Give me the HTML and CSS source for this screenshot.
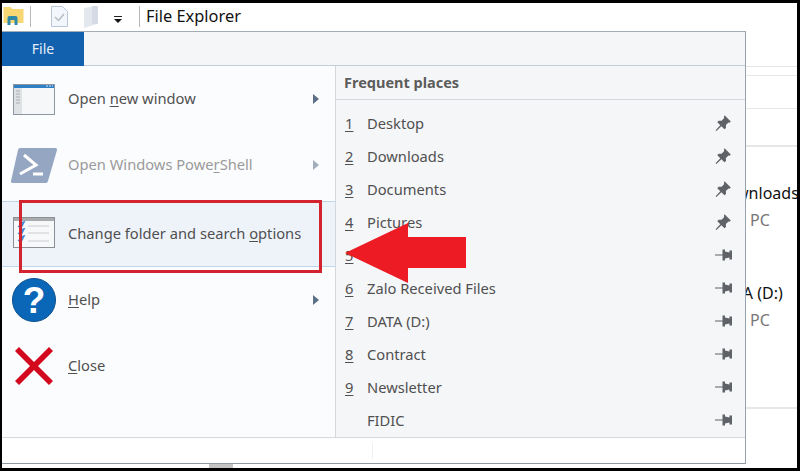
FILE: index.html
```html
<!DOCTYPE html>
<html lang="en">
<head>
<meta charset="utf-8">
<title>File Explorer</title>
<link rel="stylesheet" href="styles.css">
</head>
<body>
<svg class="defs" width="0" height="0" aria-hidden="true">
  <symbol id="pinned" viewBox="0 0 18 18"><path d="M10.500 1.200l6.300 6.300-1.300 1.200-1-.3-2.600 2.600.1 3-1.600 1.300-3-3-5 4.600-.8-.6 4.700-5.100-3-3 1.300-1.500 3 .1 2.600-2.700-.3-1z" fill="#5f6266"/></symbol>
  <symbol id="unpinned" viewBox="0 0 18 14"><path d="M0 6.500h7.500V1.500h2.500v2l4.500 1V2.500h2.500v9h-2.500v-2l-4.500 1v2H7.500v-5H0z" fill="#5f6266"/></symbol>
  <symbol id="chev" viewBox="0 0 6 10"><path d="M0 0l6 5-6 5z" fill="#5b6f86"/></symbol>
</svg>
<div class="frame">
  <header class="titlebar">
    <svg class="qa-folder" viewBox="0 0 20 20"><path d="M0 2h7l2 2h11v14H0z" fill="#f7d774"/><path d="M4 20v-7a2 2 0 012-2h6a2 2 0 012 2v7h-3v-5H7v5z" fill="#2e88a8"/></svg>
    <i class="qa-sep"></i>
    <svg class="qa-doc" viewBox="0 0 17 21"><path d="M.5.5h11l5 5v15H.5z" fill="#f3f6fb" stroke="#b9c6d8"/><path d="M4 11l3.500 3.500L13 8" fill="none" stroke="#b6bcc4" stroke-width="1.500"/></svg>
    <svg class="qa-fold" viewBox="0 0 14 22"><path d="M0 2l13-2v18L0 22z" fill="#e3e8ef"/><path d="M8 0h6v18H8z" fill="#d4dbe4"/></svg>
    <svg class="qa-drop" viewBox="0 0 8 7"><path d="M0 0h8v1H0z" fill="#222"/><path d="M0 3h8L4 7z" fill="#111"/></svg>
    <i class="qa-sep qa-sep-2"></i>
    <span class="title">File Explorer</span>
  </header>
  <div class="body">
    <section class="menu">
      <div class="tabrow"><div class="tab">File</div></div>
      <div class="panels">
        <nav class="commands">
          <div class="cmd">
            <svg class="cmd-icon" viewBox="0 0 42 31"><rect x=".5" y=".5" width="41" height="30" fill="#f6f7f8" stroke="#8c97a3"/><rect x="1" y="1" width="40" height="3" fill="#2f7fc4"/><rect x="1" y="4" width="8" height="26" fill="#dfe2e5"/><path d="M3 7h4M3 10h4M3 13h4M3 16h4M3 19h4" stroke="#a8adb3"/><path d="M33 2h2M36 2h2M39 2h1" stroke="#d7e6f4"/></svg>
            <span class="cmd-label">Open <u>n</u>ew window</span>
            <svg class="chev"><use href="#chev"/></svg>
          </div>
          <div class="cmd cmd-off">
            <svg class="cmd-icon cmd-ps" viewBox="0 0 46 35"><path d="M9 0h35q2.500 0 2 2l-9 31q-.500 2-2 2H2q-2.500 0-2-2L7 2q.500-2 2-2z" fill="#94a6c2"/><path d="M13 7l12 10-16 9" fill="none" stroke="#fff" stroke-width="3"/><path d="M22 26h10" stroke="#fff" stroke-width="3"/></svg>
            <span class="cmd-label">Open Windows Powe<u>r</u>Shell</span>
            <svg class="chev chev-off"><use href="#chev"/></svg>
          </div>
          <div class="cmd cmd-hover">
            <svg class="cmd-icon" viewBox="0 0 42 31"><rect x=".5" y=".5" width="41" height="30" fill="#f7f8fa" stroke="#8c8f94"/><rect x="1" y="1" width="40" height="3" fill="#a9abae"/><path d="M15 9h21M15 16h21M15 24h21" stroke="#c9ccd0"/><path d="M8 6l3-1-3 6-3-2M8 13l3-1-3 6-3-2M8 20l3-1-3 6-3-2" fill="none" stroke="#3b87d6" stroke-width="1.500"/></svg>
            <span class="cmd-label">Change folder and search <u>o</u>ptions</span>
          </div>
          <div class="cmd cmd-help">
            <svg class="cmd-icon cmd-q" viewBox="0 0 44 44"><circle cx="22" cy="22" r="21.500" fill="#0a67b8" stroke="#0b4f8c"/><text class="q-mark" x="22" y="35" text-anchor="middle">?</text></svg>
            <span class="cmd-label"><u>H</u>elp</span>
            <svg class="chev"><use href="#chev"/></svg>
          </div>
          <div class="cmd cmd-close">
            <svg class="cmd-icon cmd-x" viewBox="0 0 38 38"><path d="M4 0l15 15L34 0l4 4-15 15 15 15-4 4-15-15L4 38l-4-4 15-15L0 4z" fill="#d30a1e"/></svg>
            <span class="cmd-label"><u>C</u>lose</span>
          </div>
        </nav>
        <aside class="places">
          <h2 class="places-head">Frequent places</h2>
          <ul class="place-list">
            <li class="place"><u class="num">1</u><span class="name">Desktop</span><svg class="pin"><use href="#pinned"/></svg></li>
            <li class="place"><u class="num">2</u><span class="name">Downloads</span><svg class="pin"><use href="#pinned"/></svg></li>
            <li class="place"><u class="num">3</u><span class="name">Documents</span><svg class="pin"><use href="#pinned"/></svg></li>
            <li class="place"><u class="num">4</u><span class="name">Pictures</span><svg class="pin"><use href="#pinned"/></svg></li>
            <li class="place"><u class="num">5</u><span class="name"></span><svg class="unpin"><use href="#unpinned"/></svg></li>
            <li class="place"><u class="num">6</u><span class="name">Zalo Received Files</span><svg class="unpin"><use href="#unpinned"/></svg></li>
            <li class="place"><u class="num">7</u><span class="name">DATA (D:)</span><svg class="unpin"><use href="#unpinned"/></svg></li>
            <li class="place"><u class="num">8</u><span class="name">Contract</span><svg class="unpin"><use href="#unpinned"/></svg></li>
            <li class="place"><u class="num">9</u><span class="name">Newsletter</span><svg class="unpin"><use href="#unpinned"/></svg></li>
            <li class="place"><span class="num"></span><span class="name">FIDIC</span><svg class="unpin"><use href="#unpinned"/></svg></li>
          </ul>
        </aside>
      </div>
      <footer class="menu-foot"><i class="foot-tick"></i></footer>
    </section>
    <section class="behind">
      <div class="rule rule-a"></div>
      <div class="rule rule-b"></div>
      <div class="rule rule-c"></div>
      <div class="rule rule-e"></div>
      <div class="peek peek-a"><span class="peek-name">Downloads:</span><span class="peek-sub">PC</span></div>
      <div class="peek peek-b"><span class="peek-name peek-name-b">TA (D:)</span><span class="peek-sub">PC</span></div>
      <div class="rule rule-d"></div>
    </section>
  </div>
  <div class="bottom-strip"><i class="thumb"></i></div>
  <div class="callout-box"></div>
  <svg class="callout-arrow" viewBox="0 0 122 60"><path d="M0 30L63 0v14h58v31H63v15z" fill="#ed1c24"/></svg>
</div>
</body>
</html>
```
FILE: styles.css
```css
* { box-sizing: border-box; }
html, body { margin: 0; padding: 0; background: #000; }
.defs { position: absolute; }
.frame {
  position: relative;
  width: 795px;
  height: 465px;
  margin-top: 3px;
  margin-left: 2px;
  background: #fff;
  overflow: hidden;
  display: flex;
  flex-direction: column;
  font-family: "Noto Sans", "Open Sans", sans-serif;
}
.titlebar { height: 28px; display: flex; align-items: flex-start; flex: none; }
.qa-folder { width: 21px; height: 20px; margin: 2px 0 0 1px; }
.qa-sep { width: 1px; height: 21px; background: #b9b9b9; margin: 3px 0 0 6px; }
.qa-doc { width: 17px; height: 21px; margin: 3px 0 0 20px; }
.qa-fold { width: 14px; height: 22px; margin: 3px 0 0 16px; }
.qa-drop { width: 8px; height: 7px; margin: 13px 0 0 16px; }
.qa-sep-2 { margin-left: 17px; }
.title { margin-left: 6px; font-size: 16.400px; line-height: 26px; color: #111; }
.body { flex: 1; display: flex; min-height: 0; }
.menu {
  width: 744px;
  flex: none;
  display: flex;
  flex-direction: column;
  border-top: 1px solid #a4adb6;
  border-right: 1px solid #98a2ae;
  border-bottom: 1px solid #8f9aa3;
  background: #fff;
  height: 433px;
}
.tabrow { height: 34px; background: #f5f6f7; border-bottom: 1px solid #c4ccd6; flex: none; }
.tab { width: 82px; height: 34px; background: #1261ae; color: #e4eefa; font-size: 14px; line-height: 34px; text-align: center; }
.panels { flex: 1; display: flex; min-height: 0; border-bottom: 1px solid #d5d8dc; }
.commands { width: 334px; background: #fbfcfe; border-right: 1px solid #d4d7db; flex: none; display: flex; flex-direction: column; }
.cmd { height: 66px; display: flex; align-items: center; position: relative; padding-left: 11px; color: #505050; font-size: 14.700px; }
.cmd-icon { width: 42px; height: 31px; flex: none; }
.cmd-ps { width: 46px; height: 35px; margin-left: -2px; margin-right: -2px; }
.cmd-q { width: 44px; height: 44px; margin-left: -1px; margin-right: -1px; }
.cmd-x { width: 38px; height: 38px; margin-left: 2px; margin-right: 2px; }
.q-mark { font: bold 37px "Liberation Sans", sans-serif; fill: #fff; }
.cmd-label { margin-left: 13px; margin-top: -2px; flex: 1; white-space: nowrap; }
.cmd-hover .cmd-label { margin-top: 0; }
.cmd u, .place u { text-underline-offset: 2px; text-decoration-thickness: 1px; }
.chev { width: 6px; height: 10px; margin-right: 16px; flex: none; }
.chev-off { opacity: .55; }
.cmd-off { color: #9a9a9a; }
.cmd-hover { margin-top: 3px; height: 66px; background: #eef3fa; border-top: 1px solid #bfd6ea; border-bottom: 1px solid #bfd6ea; padding-bottom: 3px; }
.places { flex: 1; background: #f5f6f8; display: flex; flex-direction: column; min-width: 0; }
.places-head { height: 34px; margin: 0; padding: 6px 0 0 8px; font-size: 14.500px; line-height: 20px; font-weight: 700; color: #5c5c5c; border-bottom: 1px solid #d5d9df; }
.place-list { list-style: none; margin: 6px 0 0; padding: 0; }
.place { height: 33px; display: flex; align-items: center; padding-left: 9px; font-size: 14.700px; color: #505050; position: relative; }
.num { width: 22px; flex: none; text-align: left; }
.name { flex: 1; white-space: nowrap; }
.pin { width: 18px; height: 18px; margin-right: 13px; flex: none; }
.unpin { width: 18px; height: 14px; margin-right: 12px; flex: none; }
.menu-foot { height: 25px; flex: none; display: flex; align-items: center; padding-left: 370px; }
.foot-tick { width: 1px; height: 16px; background: #f0f0f0; }
.behind { flex: 1; position: relative; overflow: hidden; min-width: 0; font-size: 16px; color: #111; }
.rule { height: 1px; background: #e6e6e6; }
.rule-a { margin-top: 35px; }
.rule-b { margin-top: 8px; }
.rule-c { margin-top: 32px; }
.rule-e { margin-top: 36px; height: 2px; }
.rule-d { margin-top: 72px; height: 2px; }
.peek { display: flex; flex-direction: column; white-space: nowrap; }
.peek-a { margin-top: 34px; }
.peek-b { margin-top: 46px; }
.peek-name { margin-left: -31px; line-height: 24px; }
.peek-name-b { margin-left: -11px; }
.peek-sub { margin-left: 4px; color: #777; line-height: 30px; font-size: 16px; }
.bottom-strip { height: 4px; position: relative; flex: none; }
.thumb { position: absolute; left: 207px; top: 0; width: 24px; height: 4px; background: #c4c4c4; }
.callout-box { position: absolute; left: 17px; top: 197px; width: 303px; height: 73px; border: 3px solid #d2232f; }
.callout-arrow { position: absolute; left: 343px; top: 220px; width: 122px; height: 60px; }
```
